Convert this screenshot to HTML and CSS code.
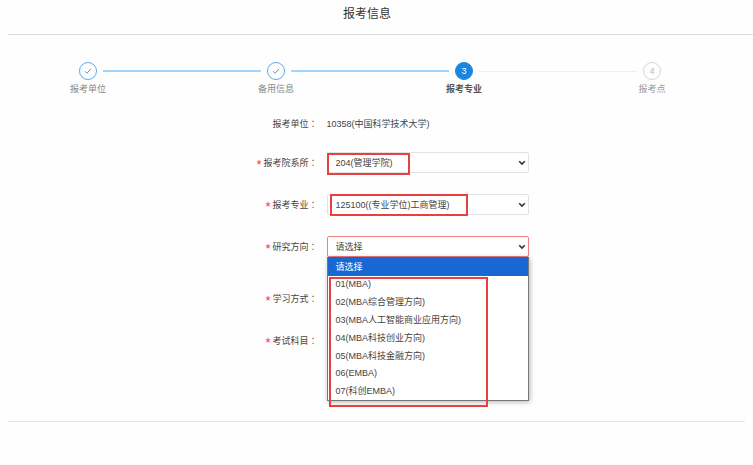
FILE: index.html
```
<!DOCTYPE html>
<html lang="zh-CN">
<head>
    <meta charset="UTF-8">
    <meta name="viewport" content="width=device-width, initial-scale=1.0">
    <title>报考信息</title>
    <link rel="stylesheet" href="styles.css">
</head>
<body>
    <h1 class="page-title">报考信息</h1>

    <div class="steps">
        <div class="step">
            <span class="step-icon">
                <svg width="8" height="8" viewBox="0 0 8 8"><path d="M1 4.2 3 6.2 7 1.8" /></svg>
            </span>
            <span class="step-name">报考单位</span>
        </div>
        <div class="step-line done"></div>
        <div class="step">
            <span class="step-icon">
                <svg width="8" height="8" viewBox="0 0 8 8"><path d="M1 4.2 3 6.2 7 1.8" /></svg>
            </span>
            <span class="step-name">备用信息</span>
        </div>
        <div class="step-line done"></div>
        <div class="step current">
            <span class="step-icon">3</span>
            <span class="step-name">报考专业</span>
        </div>
        <div class="step-line"></div>
        <div class="step waiting">
            <span class="step-icon">4</span>
            <span class="step-name">报考点</span>
        </div>
    </div>

    <form class="apply-form">
        <div class="row">
            <span class="label">报考单位<span class="colon">：</span></span>
            <span class="value">10358(中国科学技术大学)</span>
        </div>
        <div class="row">
            <label class="label" for="college"><span class="required">*</span>报考院系所<span class="colon">：</span></label>
            <div class="field">
                <select id="college">
                    <option>204(管理学院)</option>
                </select>
                <svg class="arrow" width="8" height="6" viewBox="0 0 8 6"><path d="M1.2 1.2 4 4 6.8 1.2" /></svg>
                <span class="mark mark-college"></span>
            </div>
        </div>
        <div class="row">
            <label class="label" for="major"><span class="required">*</span>报考专业<span class="colon">：</span></label>
            <div class="field">
                <select id="major">
                    <option>125100((专业学位)工商管理)</option>
                </select>
                <svg class="arrow" width="8" height="6" viewBox="0 0 8 6"><path d="M1.2 1.2 4 4 6.8 1.2" /></svg>
                <span class="mark mark-major"></span>
            </div>
        </div>
        <div class="row row-open">
            <label class="label" for="direction"><span class="required">*</span>研究方向<span class="colon">：</span></label>
            <div class="field">
                <select id="direction" class="error">
                    <option>请选择</option>
                </select>
                <svg class="arrow" width="8" height="6" viewBox="0 0 8 6"><path d="M1.2 1.2 4 4 6.8 1.2" /></svg>
                <ul class="menu" role="listbox" aria-label="研究方向">
                    <li class="selected" role="option" aria-selected="true">请选择</li>
                    <li class="latin" role="option">01(MBA)</li>
                    <li role="option">02(MBA综合管理方向)</li>
                    <li role="option">03(MBA人工智能商业应用方向)</li>
                    <li role="option">04(MBA科技创业方向)</li>
                    <li role="option">05(MBA科技金融方向)</li>
                    <li class="latin" role="option">06(EMBA)</li>
                    <li role="option">07(科创EMBA)</li>
                </ul>
                <span class="mark mark-menu"></span>
            </div>
        </div>
        <div class="row">
            <span class="label"><span class="required">*</span>学习方式<span class="colon">：</span></span>
        </div>
        <div class="row">
            <span class="label"><span class="required">*</span>考试科目<span class="colon">：</span></span>
        </div>
    </form>
</body>
</html>
```

FILE: styles.css
```
* {
    box-sizing: border-box;
}
body {
    margin: 0;
    background-color: #fefefe;
    color: #444;
    font-family: "Liberation Sans", "Noto Sans CJK SC", sans-serif;
    font-size: 9px;
}
.page-title {
    margin: 0 0 27px 8px;
    padding: 5px 27px 10px 0;
    border-bottom: 1px solid #d8dcdc;
    color: #333;
    font-size: 12px;
    font-weight: normal;
    line-height: 19px;
    text-align: center;
}

/* steps */
.steps {
    display: flex;
    padding: 0 88px 0 75px;
}
.step {
    display: flex;
    flex-direction: column;
    align-items: center;
    width: 26px;
}
.step-icon {
    display: flex;
    align-items: center;
    justify-content: center;
    width: 18px;
    height: 18px;
    border: 1px solid #5aaaf0;
    border-radius: 50%;
}
.step-icon svg {
    fill: none;
    stroke: #4a9be8;
    stroke-width: 1;
}
.step-name {
    color: #888;
    font-size: 9px;
    line-height: 19px;
    white-space: nowrap;
}
.step-line {
    flex: 1;
    height: 1px;
    margin: 9px 2px 0;
    background-color: #eee;
}
.step-line.done {
    height: 2px;
    margin-top: 8px;
    background-color: #a3d4fb;
}
.current .step-icon {
    border-color: #1b86e0;
    background-color: #1b86e0;
    color: #fff;
}
.current .step-name {
    color: #555;
    font-weight: bold;
}
.waiting .step-icon {
    border-color: #d5d5d5;
    color: #bbb;
}
.waiting .step-name {
    color: #999;
}

/* form */
.apply-form {
    display: flex;
    flex-direction: column;
    gap: 21px;
    margin: 14px 8px 0;
    padding-bottom: 70px;
    border-bottom: 1px solid #e4e4e4;
}
.row {
    display: flex;
    align-items: center;
    gap: 9px;
    height: 21px;
}
.row:first-child {
    margin-bottom: -3px;
}
.row-open {
    margin-bottom: 10px;
}
.label {
    display: flex;
    align-items: center;
    justify-content: flex-end;
    width: 42%;
}
.colon {
    font-family: "Noto Sans CJK TC", sans-serif;
}
.required {
    height: 12px;
    margin-right: 2px;
    color: #f33;
    font-size: 13px;
    line-height: 15px;
}
.field {
    position: relative;
    width: 27.5%;
}
select {
    display: block;
    width: 100%;
    height: 21px;
    padding: 0 20px 0 8px;
    border: 1px solid #e2e2e2;
    border-radius: 2px;
    outline: none;
    background-color: #fff;
    color: #444;
    font-family: inherit;
    font-size: 9px;
    appearance: none;
}
select.error {
    border-color: #f08080;
}
.arrow {
    position: absolute;
    top: 8px;
    right: 3px;
    fill: none;
    stroke: #333;
    stroke-width: 1.6;
    pointer-events: none;
}
.menu {
    position: absolute;
    top: 21px;
    left: 0;
    z-index: 1;
    width: 100%;
    margin: 0;
    padding: 0;
    border: 1px solid #777;
    border-top: 1px solid #1967d2;
    background-color: #fff;
    box-shadow: 1px 1px 5px rgba(0, 0, 0, 0.3);
    list-style: none;
}
.menu li {
    height: 18px;
    padding-left: 8px;
    line-height: 18px;
    white-space: nowrap;
}
.menu .latin {
    height: 17px;
    line-height: 17px;
}
.menu .selected {
    background-color: #1967d2;
    color: #fff;
}

/* red highlight boxes */
.mark {
    position: absolute;
    z-index: 2;
    border: 2px solid #e84040;
    pointer-events: none;
}
.mark-college {
    top: 1px;
    left: 0;
    width: 83px;
    height: 22px;
}
.mark-major {
    top: 0;
    left: 3px;
    width: 138px;
    height: 22px;
}
.mark-menu {
    top: 41px;
    left: 2px;
    width: 159px;
    height: 130px;
}
```
